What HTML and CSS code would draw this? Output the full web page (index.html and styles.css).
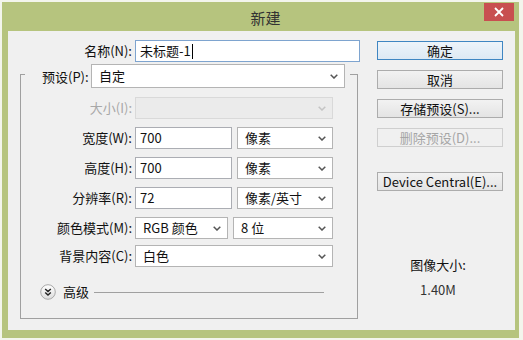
FILE: index.html
```html
<!DOCTYPE html>
<html lang="zh">
<head>
<meta charset="utf-8">
<title>新建</title>
<link rel="stylesheet" href="styles.css">
</head>
<body>
<div class="window">
  <div class="titlebar">
    <span class="title">新建</span>
    <div class="close">
      <svg width="10" height="10" viewBox="0 0 10 10"><path d="M1 1L9 9M9 1L1 9" stroke="#fff" stroke-width="1.8" fill="none"/></svg>
    </div>
  </div>
  <div class="client">
    <div class="left">
      <div class="row name-row">
        <span class="lbl">名称(N):</span>
        <div class="field input focus w225">未标题-1<span class="caret"></span></div>
      </div>
      <div class="group">
        <div class="preset-row">
          <span class="plabel">预设(P):</span>
          <div class="field select w254">自定<svg class="arrow" width="8" height="5" viewBox="0 0 8 5"><path d="M0.7 0.7L4 4L7.3 0.7" stroke="#555" stroke-width="1.5" fill="none"/></svg></div>
        </div>
        <div class="row first">
          <span class="lbl disabled">大小(I):</span>
          <div class="field select off w198"><svg class="arrow" width="8" height="5" viewBox="0 0 8 5"><path d="M0.7 0.7L4 4L7.3 0.7" stroke="#c4c4c4" stroke-width="1.5" fill="none"/></svg></div>
        </div>
        <div class="row">
          <span class="lbl">宽度(W):</span>
          <div class="field input w97">700</div>
          <div class="field select w96">像素<svg class="arrow" width="8" height="5" viewBox="0 0 8 5"><path d="M0.7 0.7L4 4L7.3 0.7" stroke="#555" stroke-width="1.5" fill="none"/></svg></div>
        </div>
        <div class="row">
          <span class="lbl">高度(H):</span>
          <div class="field input w97">700</div>
          <div class="field select w96">像素<svg class="arrow" width="8" height="5" viewBox="0 0 8 5"><path d="M0.7 0.7L4 4L7.3 0.7" stroke="#555" stroke-width="1.5" fill="none"/></svg></div>
        </div>
        <div class="row">
          <span class="lbl">分辨率(R):</span>
          <div class="field input w97">72</div>
          <div class="field select w96">像素/英寸<svg class="arrow" width="8" height="5" viewBox="0 0 8 5"><path d="M0.7 0.7L4 4L7.3 0.7" stroke="#555" stroke-width="1.5" fill="none"/></svg></div>
        </div>
        <div class="row">
          <span class="lbl">颜色模式(M):</span>
          <div class="field select w93">RGB 颜色<svg class="arrow" width="8" height="5" viewBox="0 0 8 5"><path d="M0.7 0.7L4 4L7.3 0.7" stroke="#555" stroke-width="1.5" fill="none"/></svg></div>
          <div class="field select w100">8 位<svg class="arrow" width="8" height="5" viewBox="0 0 8 5"><path d="M0.7 0.7L4 4L7.3 0.7" stroke="#555" stroke-width="1.5" fill="none"/></svg></div>
        </div>
        <div class="row last">
          <span class="lbl">背景内容(C):</span>
          <div class="field select w198">白色<svg class="arrow" width="8" height="5" viewBox="0 0 8 5"><path d="M0.7 0.7L4 4L7.3 0.7" stroke="#555" stroke-width="1.5" fill="none"/></svg></div>
        </div>
        <div class="advanced">
          <svg class="adv-icon" width="16" height="16" viewBox="0 0 16 16">
            <defs><linearGradient id="g" x1="0" y1="0" x2="0" y2="1"><stop offset="0" stop-color="#ffffff"/><stop offset="1" stop-color="#dcdcdc"/></linearGradient></defs>
            <circle cx="8" cy="8" r="7.3" fill="url(#g)" stroke="#a8a8a8" stroke-width="1"/>
            <path d="M5.2 5L8 7.6L10.8 5M5.2 8.4L8 11L10.8 8.4" stroke="#222" stroke-width="1.4" fill="none"/>
          </svg>
          <span class="adv-text">高级</span>
          <span class="adv-line"></span>
        </div>
      </div>
    </div>
    <div class="right">
      <div class="btn default">确定</div>
      <div class="btn">取消</div>
      <div class="btn">存储预设(S)...</div>
      <div class="btn disabled">删除预设(D)...</div>
      <div class="btn device">Device Central(E)...</div>
      <div class="imgsize">
        <div class="imgsize-label">图像大小:</div>
        <div class="imgsize-value">1.40M</div>
      </div>
    </div>
  </div>
</div>
</body>
</html>
```

FILE: styles.css
```css
html, body {
  margin: 0;
  padding: 0;
}
body {
  width: 523px;
  height: 340px;
  background: #f3f5ec;
  font-family: "Noto Sans CJK SC", "Noto Sans", sans-serif;
  font-size: 13px;
  color: #111;
  overflow: hidden;
}
.window {
  margin: 2px 0 0 2px;
  width: 517px;
  height: 336px;
  background: #b6c47e;
  box-sizing: border-box;
  padding: 0 4px 8px 6px;
  display: flex;
  flex-direction: column;
}
.titlebar {
  position: relative;
  height: 29px;
  flex: 0 0 29px;
  display: flex;
  align-items: center;
  justify-content: center;
}
.title {
  font-size: 15px;
  color: #333;
  margin-left: 8px;
  margin-top: 2px;
}
.close {
  position: absolute;
  right: 1px;
  top: 1px;
  width: 30px;
  height: 18px;
  background: #c84f50;
  display: flex;
  align-items: center;
  justify-content: center;
}
.client {
  flex: 1;
  background: #f0f0f0;
  display: flex;
  align-items: flex-start;
}
.left {
  width: 352px;
  padding-left: 12px;
  box-sizing: border-box;
  padding-top: 9px;
}
.row {
  display: flex;
  align-items: center;
  height: 22px;
  margin-top: 8px;
}
.name-row {
  margin-top: 0;
}
.row.first {
  margin-top: 9px;
}
.row.last {
  margin-top: 6px;
}
.lbl {
  width: 111px;
  flex: 0 0 111px;
  text-align: right;
  margin-right: 3px;
  white-space: nowrap;
  line-height: 22px;
}
.name-row .lbl {
  width: 112px;
  flex-basis: 112px;
}
.lbl.disabled {
  color: #a8a8a8;
}
.field {
  height: 22px;
  box-sizing: border-box;
  border: 1px solid #b5b5b5;
  background: #fff;
  display: flex;
  align-items: center;
  position: relative;
  white-space: nowrap;
  line-height: 20px;
}
.input {
  padding-left: 4px;
  border-color: #abadb3;
}
.input.focus {
  border-color: #7ea4cf;
}
.caret {
  display: inline-block;
  width: 1px;
  height: 15px;
  background: #000;
  margin-left: 1px;
}
.select {
  padding-left: 7px;
  border-color: #b4b4b4;
}
.select .arrow {
  position: absolute;
  right: 6px;
  top: 8px;
}
.select.off {
  background: #ebebeb;
  border-color: #d9d9d9;
}
.w225 { width: 225px; }
.w254 { width: 254px; height: 24px; }
.w198 { width: 198px; }
.w97 { width: 97px; }
.w96 { width: 96px; margin-left: 5px; }
.w93 { width: 93px; }
.w100 { width: 100px; margin-left: 5px; }
.group {
  margin-top: 12px;
  width: 338px;
  box-sizing: border-box;
  border: 1px solid #a0a0a0;
  padding-bottom: 18px;
}
.preset-row {
  display: flex;
  align-items: center;
  margin: -11px 7px 0 4px;
  padding: 0 5px 0 17px;
  background: #f0f0f0;
  height: 24px;
}
.plabel {
  white-space: nowrap;
}
.preset-row .select {
  margin-left: auto;
}
.preset-row .select .arrow {
  top: 9px;
}
.advanced {
  display: flex;
  align-items: center;
  height: 16px;
  margin-top: 17px;
  padding-left: 19px;
}
.adv-text {
  margin-left: 7px;
  line-height: 16px;
}
.adv-line {
  width: 230px;
  height: 1px;
  background: #a0a0a0;
  margin-left: 5px;
}
.right {
  margin-left: 17px;
  width: 126px;
  padding-top: 10px;
  display: flex;
  flex-direction: column;
}
.btn {
  height: 19px;
  box-sizing: border-box;
  border: 1px solid #acacac;
  background: linear-gradient(#f2f2f2, #e4e4e4);
  display: flex;
  align-items: center;
  justify-content: center;
  margin-top: 10px;
  white-space: nowrap;
  line-height: 17px;
}
.btn.default {
  margin-top: 0;
  border-color: #3f86c2;
  background: linear-gradient(#edf4fa, #dde9f4);
}
.btn.disabled {
  color: #a6a6a6;
  border-color: #cfcfcf;
  background: #f0f0f0;
}
.btn.device {
  margin-top: 25px;
}
.imgsize {
  margin-top: 66px;
  text-align: center;
  line-height: 16px;
  margin-right: 4px;
}
.imgsize-value {
  margin-top: 9px;
  color: #333;
}
```
